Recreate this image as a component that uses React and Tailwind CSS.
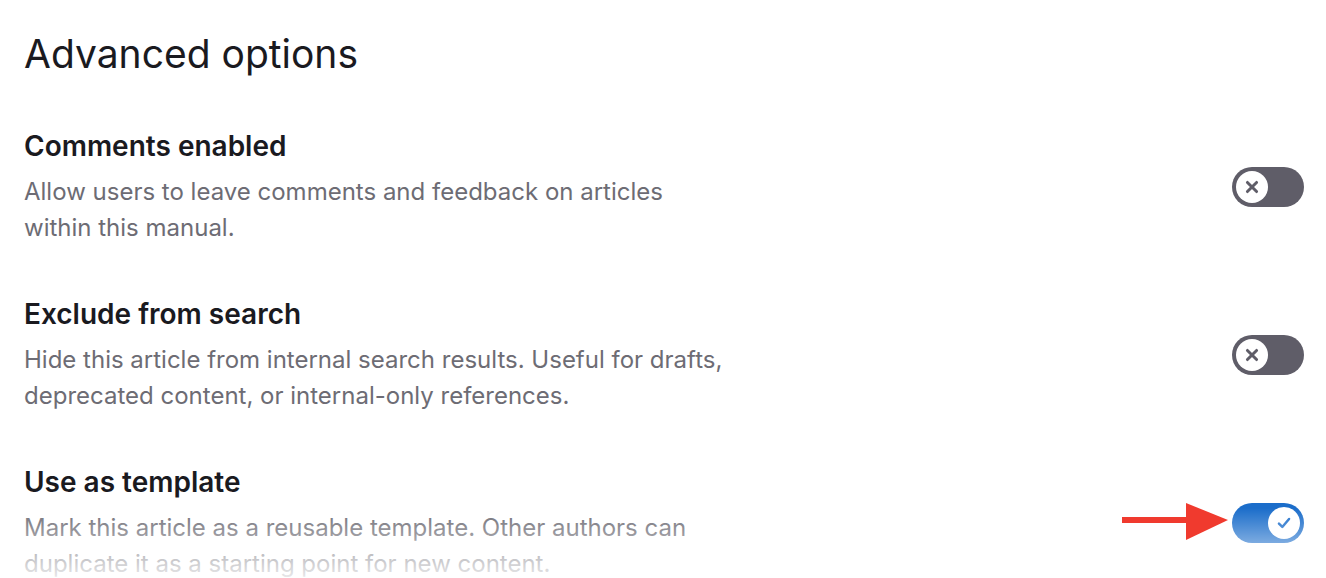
import React, { useState } from 'react';

const options = [
    {
        id: 'comments',
        title: 'Comments enabled',
        description: 'Allow users to leave comments and feedback on articles within this manual.',
        on: false,
    },
    {
        id: 'search',
        title: 'Exclude from search',
        description: 'Hide this article from internal search results. Useful for drafts, deprecated content, or internal-only references.',
        on: false,
    },
    {
        id: 'template',
        title: 'Use as template',
        description: 'Mark this article as a reusable template. Other authors can duplicate it as a starting point for new content.',
        on: true,
    },
];

function Toggle({ checked, onChange }) {
    return (
        <button
            type="button"
            role="switch"
            aria-checked={checked}
            onClick={onChange}
            className={
                checked
                    ? 'relative flex h-10 w-[72px] shrink-0 items-center justify-end rounded-full bg-[#1b6dca] p-1'
                    : 'relative flex h-10 w-[72px] shrink-0 items-center justify-start rounded-full bg-[#5f5d68] p-1'
            }
        >
            <span className="flex h-8 w-8 items-center justify-center rounded-full bg-white">
                {checked ? (
                    <svg width="18" height="18" viewBox="0 0 16 16" fill="none">
                        <path d="M3.5 8.5 L6.5 11.5 L12.5 4.5" stroke="#1b6dca" strokeWidth="2.2" strokeLinecap="round" strokeLinejoin="round" />
                    </svg>
                ) : (
                    <svg width="16" height="16" viewBox="0 0 14 14" fill="none">
                        <path d="M3 3 L11 11 M11 3 L3 11" stroke="#5f5d68" strokeWidth="2.6" strokeLinecap="round" />
                    </svg>
                )}
            </span>
        </button>
    );
}

export default function App() {
    const [state, setState] = useState(
        Object.fromEntries(options.map((o) => [o.id, o.on]))
    );

    const flip = (id) => setState({ ...state, [id]: !state[id] });

    return (
        <div
            className="relative h-[578px] w-full overflow-hidden bg-white pl-6 pr-[22px] pt-[28px]"
            style={{ fontFamily: 'Inter, "Noto Sans", sans-serif' }}
        >
            <h1 className="text-[39px] leading-[52px] font-normal text-[#1a1a1f]">Advanced options</h1>

            <div className="mt-[47px] flex flex-col gap-[49px]">
                {options.map((o) => (
                    <div key={o.id} className="flex items-center justify-between">
                        <div className="max-w-[712px]">
                            <h2 className="text-[28px] leading-[38px] font-semibold text-[#1a1a1f]">{o.title}</h2>
                            <p className="mt-[9px] text-[24px] leading-[36px] text-[#6d6c74]">{o.description}</p>
                        </div>
                        <Toggle checked={state[o.id]} onChange={() => flip(o.id)} />
                    </div>
                ))}
            </div>

            <div className="pointer-events-none absolute inset-x-0 bottom-0 h-[70px] bg-gradient-to-b from-white/0 to-white/85" />

            {/* annotation arrow pointing at the template toggle */}
            <svg className="absolute left-[1120px] top-[500px]" width="112" height="44" viewBox="0 0 112 44">
                <rect x="2" y="17" width="70" height="6" fill="#f03a2e" />
                <polygon points="66,3 108,20 66,40" fill="#f03a2e" />
            </svg>
        </div>
    );
}
